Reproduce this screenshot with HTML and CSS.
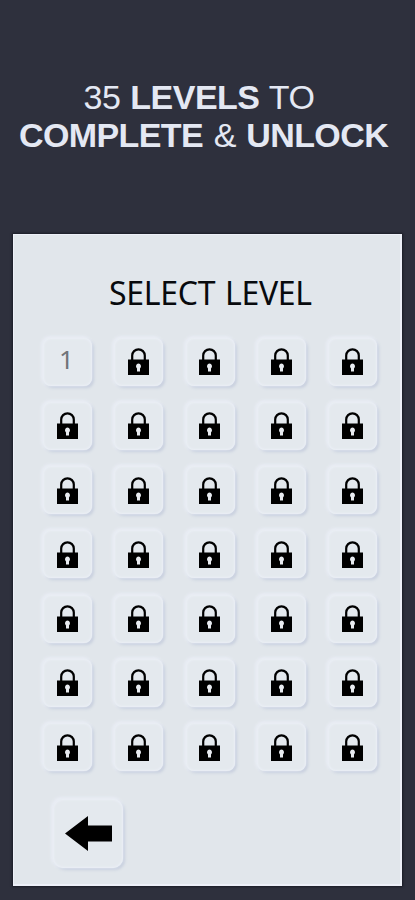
FILE: index.html
```html
<!DOCTYPE html>
<html lang="en">
<head>
<meta charset="utf-8">
<title>Select level</title>
<link rel="stylesheet" href="styles.css">
</head>
<body>
<svg width="0" height="0" class="defs">
  <symbol id="lock" viewBox="0 0 21 28">
    <path d="M4.2 12V7.6a6.3 6.3 0 0 1 12.6 0V12" fill="none" stroke="#000" stroke-width="2.2"/>
    <path d="M0 11.5h21V27H0z"/>
    <path d="M10.5 15.6a2.7 2.7 0 0 1 1.5 4.8v3h-3v-3a2.7 2.7 0 0 1 1.5-4.8z" fill="#e8ebf0"/>
  </symbol>
</svg>
<header class="headline">
  <div class="line first">35 <b>LEVELS</b> TO</div>
  <div class="line second"><b>COMPLETE</b> &amp; <b>UNLOCK</b></div>
</header>
<main class="panel">
  <h1 class="title">SELECT LEVEL</h1>
  <div class="levels" id="levels"><button class="tile"><span class="number">1</span></button></div>
  <button class="tile back" aria-label="Back">
    <svg width="47" height="35" viewBox="0 0 47 35"><path d="M0 17.5 23 0v9.5h24v16H23V35z"/></svg>
  </button>
</main>
<script src="levels.js"></script>
</body>
</html>
```
FILE: styles.css
```css
* { box-sizing: border-box; }
body {
  margin: 0;
  height: 900px;
  overflow: hidden;
  background: #2e303d;
  display: flex;
  flex-direction: column;
}
.defs { display: block; flex: none; height: 0; }
.headline {
  height: 234px;
  flex: none;
  padding-top: 78px;
  color: #e4e8f3;
  font: 34px/38px "Liberation Sans", sans-serif;
  white-space: nowrap;
}
.line { width: max-content; }
.first { margin-left: 83.5px; letter-spacing: -0.5px; word-spacing: 1px; }
.second { margin-left: 19px; letter-spacing: -0.6px; word-spacing: 1.7px; }
.panel {
  width: 389px;
  height: 652px;
  margin-left: 13px;
  background: #e1e6eb;
  border: 1px solid #edf0f8;
  border-width: 1px 2px 2px 1px;
  box-shadow: 0 0 2px 1px #1b1d27;
}
.title {
  margin: 36px 0 0 95px;
  color: #080a0d;
  font: 400 32px/44px "Noto Sans", sans-serif;
  letter-spacing: -0.3px;
  word-spacing: 1.8px;
  white-space: nowrap;
}
.levels {
  margin: 22.5px 0 0 29px;
  display: grid;
  grid-template-columns: repeat(5, 49px);
  grid-auto-rows: 48px;
  column-gap: 22.3px;
  row-gap: 16.3px;
}
.tile {
  border: 0;
  padding: 0;
  border-radius: 8px;
  background: #e4e9ee;
  box-shadow: inset 0 0 2px 1px #ebeff6, -1px -1px 3px 1px #e9edf5, 2px 2px 3px #c5cddd;
  display: flex;
  align-items: center;
  justify-content: center;
  color: #707479;
  font: 26px/48px "Noto Sans", sans-serif;
}
.number { margin: -5px 2px 0 0; }
.lock { width: 21px; height: 28px; display: block; margin: 1px 0.5px 0 0; }
.back {
  width: 70px;
  height: 69px;
  margin: 28px 0 0 39px;
  border-radius: 10px;
  padding: 0;
}
```
FILE: levels.js
```js
const grid = document.getElementById("levels");
for (let level = 2; level <= 35; level++) {
  grid.insertAdjacentHTML("beforeend",
    `<button class="tile" aria-label="Locked level"><svg class="lock"><use href="#lock"/></svg></button>`);
}
```
